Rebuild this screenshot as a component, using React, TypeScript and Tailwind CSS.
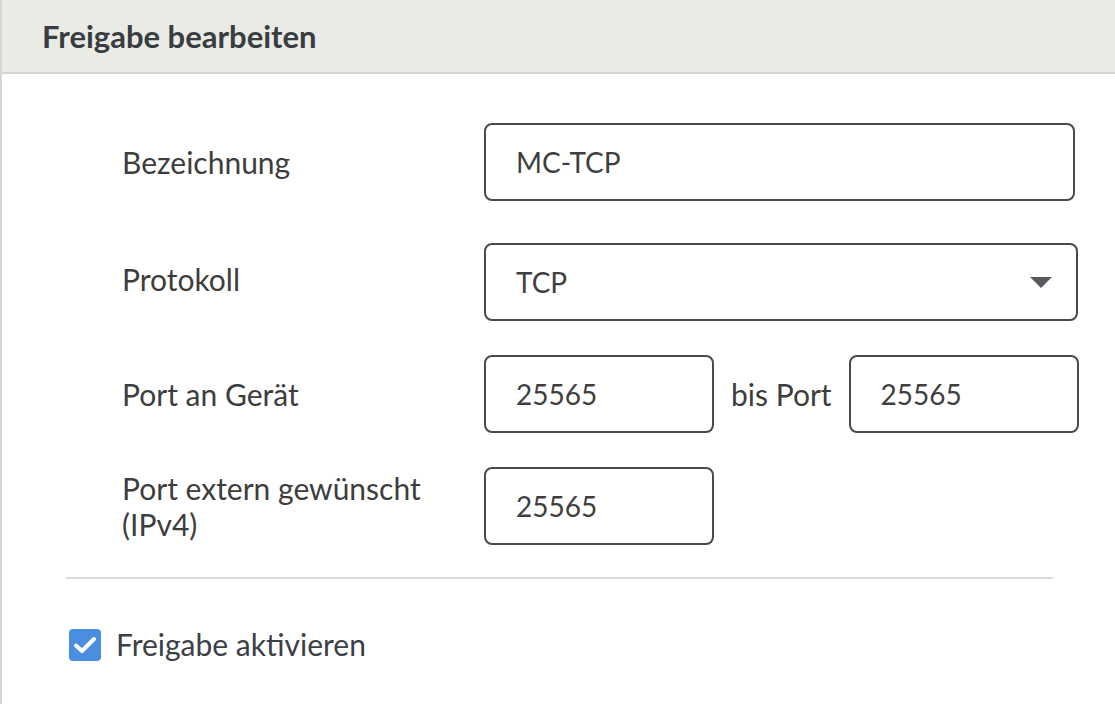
import React from 'react';

const font = { fontFamily: 'Lato, "Noto Sans", sans-serif' };

function Field({ value, width }: { value: string; width: string }) {
  return (
    <div
      className={`${width} h-[78px] flex items-center pl-[30px] border-2 border-[#4a4a4a] rounded-[8px] text-[28px] text-[#3f3f3f] bg-white`}
    >
      {value}
    </div>
  );
}

export default function App() {
  return (
    <div className="w-[1115px] h-[704px] bg-white border-l-2 border-[#d6d6d6] overflow-hidden" style={font}>
      {/* Header */}
      <div className="h-[74px] bg-[#ebebe6] border-b-2 border-[#d6d6d6] flex items-center pl-[40px]">
        <h1 className="text-[31px] font-bold text-[#383d42]">Freigabe bearbeiten</h1>
      </div>

      {/* Form */}
      <div className="pt-[49px] pl-[120px] text-[30px] text-[#3d3d3d]">
        <div className="flex items-center">
          <div className="w-[362px]">Bezeichnung</div>
          <Field value="MC-TCP" width="w-[591px]" />
        </div>

        <div className="flex items-center mt-[42px]">
          <div className="w-[362px] -mt-[6px]">Protokoll</div>
          <div className="w-[594px] h-[78px] flex items-center justify-between pl-[30px] pr-[24px] border-2 border-[#4a4a4a] rounded-[8px] text-[28px] text-[#3f3f3f]">
            <span>TCP</span>
            <svg width="22" height="11" viewBox="0 0 22 11">
              <path d="M0 0 L22 0 L11 11 Z" fill="#555a60" />
            </svg>
          </div>
        </div>

        <div className="flex items-center mt-[34px]">
          <div className="w-[362px]">Port an Gerät</div>
          <Field value="25565" width="w-[230px]" />
          <span className="mx-[17px]">bis Port</span>
          <Field value="25565" width="w-[230px]" />
        </div>

        <div className="flex items-center mt-[34px]">
          <div className="w-[362px] leading-[36px]">
            Port extern gewünscht
            <br />
            (IPv4)
          </div>
          <Field value="25565" width="w-[230px]" />
        </div>
      </div>

      <div className="ml-[64px] w-[987px] h-[2px] bg-[#dadada] mt-[32px]" />

      <label className="flex items-center gap-[15px] ml-[67px] mt-[43px] text-[30px] text-[#3b4046]">
        <span className="w-[32px] h-[32px] rounded-[4px] bg-[#4a8fdf] flex items-center justify-center">
          <svg width="22" height="18" viewBox="0 0 22 18" fill="none">
            <path d="M2 9.5 L8 15 L20 3" stroke="white" strokeWidth="4" strokeLinecap="round" strokeLinejoin="round" />
          </svg>
        </span>
        Freigabe aktivieren
      </label>
    </div>
  );
}
